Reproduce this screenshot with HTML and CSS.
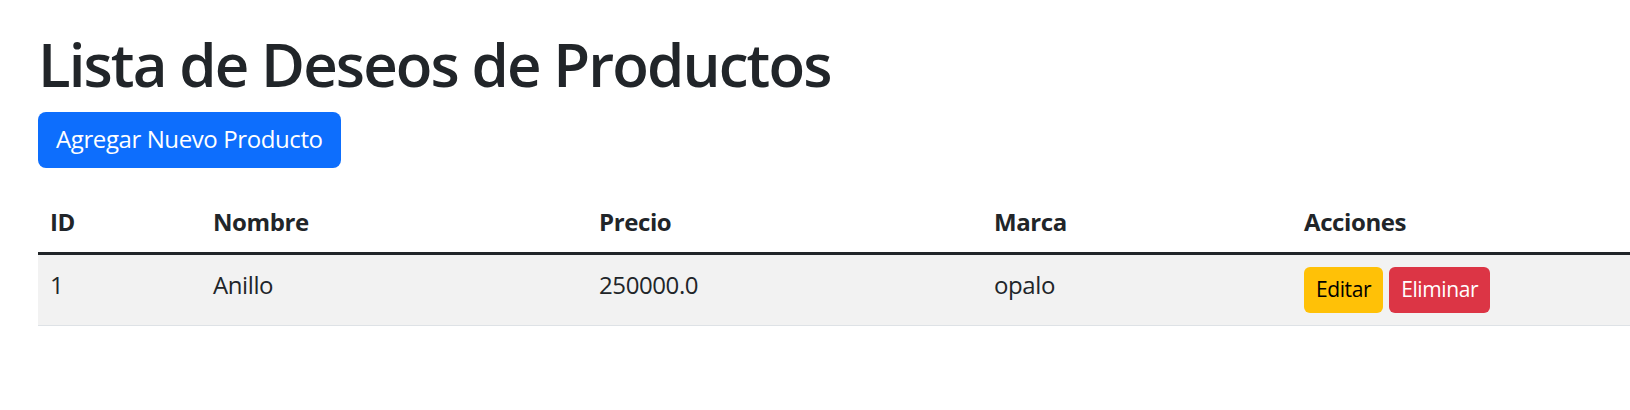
FILE: index.html
```html
<!DOCTYPE html>
<html lang="es">
<head>
<meta charset="utf-8">
<title>Lista de Deseos de Productos</title>
<link rel="stylesheet" href="styles.css">
</head>
<body>
<div class="page">
  <h1 class="title">Lista de Deseos de Productos</h1>
  <a class="btn btn-primary" href="#">Agregar Nuevo Producto</a>
  <table class="table">
    <colgroup>
      <col class="col-id">
      <col class="col-nombre">
      <col class="col-precio">
      <col class="col-marca">
      <col class="col-acciones">
    </colgroup>
    <thead>
      <tr>
        <th>ID</th>
        <th>Nombre</th>
        <th>Precio</th>
        <th>Marca</th>
        <th>Acciones</th>
      </tr>
    </thead>
    <tbody>
      <tr class="striped">
        <td>1</td>
        <td>Anillo</td>
        <td>250000.0</td>
        <td>opalo</td>
        <td>
          <div class="actions">
            <a class="btn-sm btn-warning" href="#">Editar</a>
            <a class="btn-sm btn-danger" href="#">Eliminar</a>
          </div>
        </td>
      </tr>
    </tbody>
  </table>
</div>
</body>
</html>
```
FILE: styles.css
```css
html, body {
  margin: 0;
  padding: 0;
  background: #fff;
}
body {
  font-family: "Open Sans", "Noto Sans", "Liberation Sans", sans-serif;
  font-size: 24px;
  line-height: 1.5;
  color: #212529;
  letter-spacing: -0.4px;
}
.page {
  padding: 28px 0 0 38px;
}
.title {
  margin: 0 0 12px 0;
  font-size: 60px;
  font-weight: 600;
  line-height: 1.2;
  letter-spacing: -1.9px;
  color: #212529;
}
.btn {
  display: inline-block;
  box-sizing: border-box;
  height: 56px;
  padding: 9px 18px;
  font-size: 24px;
  line-height: 36px;
  border-radius: 8px;
  text-decoration: none;
}
.btn-primary {
  background: #0d6efd;
  color: #fff;
}
.table {
  margin-top: 24px;
  width: 100%;
  border-collapse: collapse;
  table-layout: fixed;
}
.table th,
.table td {
  padding: 12px;
  text-align: left;
  vertical-align: top;
}
.table th {
  font-weight: 700;
  border-bottom: 3px solid #212529;
}
.table td {
  border-bottom: 1px solid #dee2e6;
}
.striped td {
  background: #f2f2f2;
}
.col-id { width: 163px; }
.col-nombre { width: 386px; }
.col-precio { width: 395px; }
.col-marca { width: 310px; }
.actions {
  display: flex;
  gap: 6px;
}
.btn-sm {
  display: inline-block;
  box-sizing: border-box;
  height: 46px;
  padding: 6px 12px;
  font-size: 21px;
  line-height: 32px;
  border-radius: 6px;
  text-decoration: none;
}
.btn-warning {
  background: #ffc107;
  color: #000;
}
.btn-danger {
  background: #dc3545;
  color: #fff;
}
```
